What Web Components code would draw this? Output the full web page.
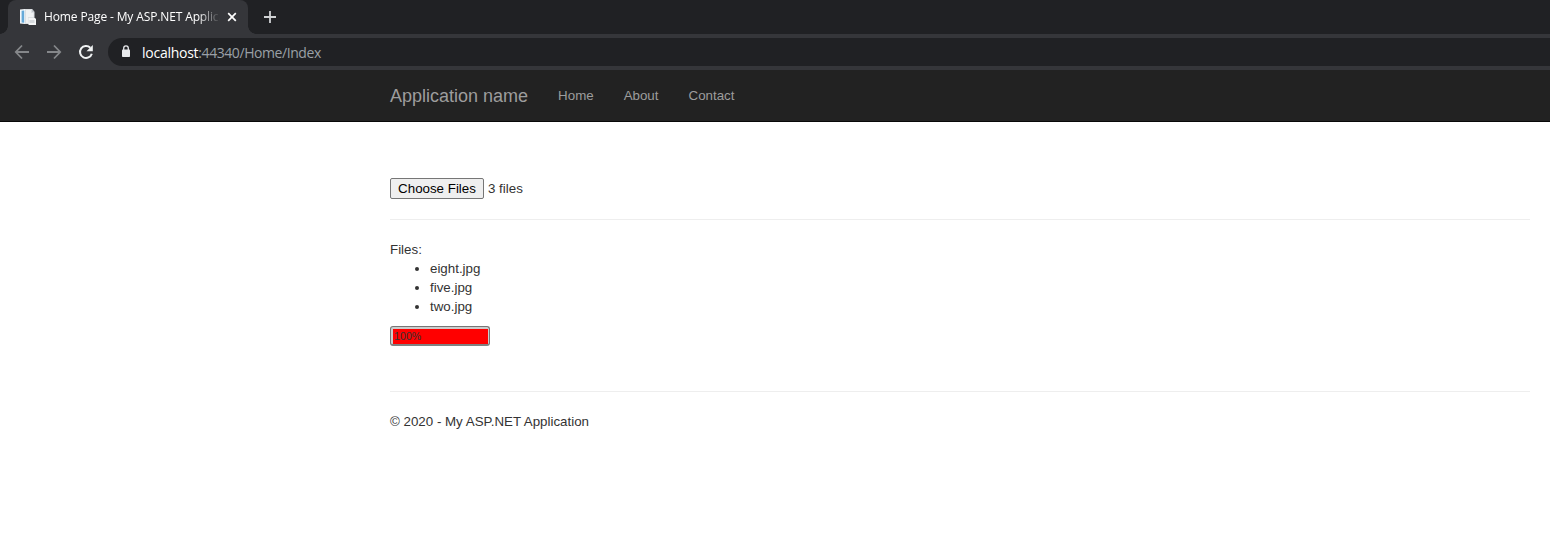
<!DOCTYPE html>
<html lang="en"><head><meta charset="utf-8"><title>Home Page - My ASP.NET Application</title>
<style>html,body{margin:0;background:#fff}body{height:550px;overflow:hidden;font-family:"Liberation Sans",Arial,sans-serif;font-size:13.333px;line-height:19px;color:#333}</style></head>
<body>
<browser-tabs><browser-tab>Home Page - My ASP.NET Application</browser-tab></browser-tabs>
<browser-toolbar><span slot="host">localhost</span><span slot="path">:44340/Home/Index</span></browser-toolbar>
<site-nav><span slot="brand">Application name</span><nav-link>Home</nav-link><nav-link>About</nav-link><nav-link>Contact</nav-link></site-nav>
<page-body>
<file-picker>3 files</file-picker>
<rule-line></rule-line>
<file-list><file-item>eight.jpg</file-item><file-item>five.jpg</file-item><file-item>two.jpg</file-item></file-list>
<upload-progress>100%</upload-progress>
<rule-line></rule-line>
<page-footer>© 2020 - My ASP.NET Application</page-footer>
</page-body>
<script>
const define=(name,html)=>customElements.define(name,class extends HTMLElement{
  constructor(){super();this.attachShadow({mode:'open'}).innerHTML=html;}
});
define('browser-tabs',`<style>:host{display:flex;height:34px;background:#202124;padding-left:8px;box-sizing:border-box}
.add{width:14px;height:14px;margin:10px 0 0 15px}</style><slot></slot>
<svg class="add" viewBox="0 0 14 14"><path d="M7 1v12M1 7h12" stroke="#d0d2d4" stroke-width="1.8"/></svg>`);
define('browser-tab',`<style>:host{display:flex;position:relative;width:240px;height:34px;box-sizing:border-box;padding-left:12px;background:#35363a;border-radius:8px 8px 0 0;color:#fff;font:12px/34px "Open Sans","Noto Sans",sans-serif}
:host::before,:host::after{content:"";position:absolute;bottom:0;width:8px;height:8px}
:host::before{left:-8px;background:radial-gradient(circle at 0 0,#202124 7.5px,#35363a 8px)}
:host::after{right:-8px;background:radial-gradient(circle at 100% 0,#202124 7.5px,#35363a 8px)}
.icon{width:16px;height:16px;margin:9px 8px 0 0;flex:none}.title{width:176px;overflow:hidden;white-space:nowrap;letter-spacing:-.13px;-webkit-mask-image:linear-gradient(90deg,#000 154px,transparent 176px)}
.close{width:10px;height:10px;margin:12px 0 0 7px;flex:none}</style>
<svg class="icon" viewBox="0 0 16 16"><path d="M0 .5l5-.5v15l-5-.6z" fill="#f3f7fa"/><path d="M1.6 1.8l2.6-.4v12.3l-2.6-.3z" fill="#65a9d8"/><path d="M5 0h7l2.5 3v12H5z" fill="#dcdfe2"/><path d="M6 1h5v3h2.5v4H8v6H6z" fill="#f0f2f3"/><path d="M8.5 9H15l1 1v6H8.5z" fill="#f4f5f5"/><path d="M9.5 11h5v3h-5z" fill="#d5d9dc"/><path d="M12 0v3h2.5" fill="#bfc4c9"/></svg>
<span class="title"><slot></slot></span><svg class="close" viewBox="0 0 10 10"><path d="M1.2 1.2l7.6 7.6m0-7.6L1.2 8.8" stroke="#fff" stroke-width="1.7"/></svg>`);
define('browser-toolbar',`<style>:host{display:flex;height:36px;background:#35363a;box-sizing:border-box;align-items:center}
svg{flex:none}.nav{width:16px;height:16px}.back{margin-left:14px}.fwd{margin-left:16px}.reload{margin-left:16px}
.address{display:flex;align-items:center;flex:1;height:28px;margin-left:14px;border-radius:14px 0 0 14px;background:#202124;color:#fff;font:14px/28px "Open Sans","Noto Sans",sans-serif;letter-spacing:-.26px}
.host,.path{padding-top:1px}.lock{width:10px;height:13px;margin:-2px 11px 0 13px}.path{color:#9aa0a6;letter-spacing:-.43px}</style>
<svg class="nav back" viewBox="0 0 16 16" fill="none" stroke="#85878a" stroke-width="1.8"><path d="M15 8H2M8 1.5L1.8 8 8 14.5"/></svg>
<svg class="nav fwd" viewBox="0 0 16 16" fill="none" stroke="#85878a" stroke-width="1.8"><path d="M1 8h13M8 1.5L14.2 8 8 14.5"/></svg>
<svg class="nav reload" viewBox="0 0 16 16"><path d="M13.8 9.7A6 6 0 1 1 12.3 3.7" fill="none" stroke="#f1f3f4" stroke-width="2"/><path d="M14.8 1v6.3H8.5z" fill="#f1f3f4"/></svg>
<div class="address"><svg class="lock" viewBox="0 0 10 13"><path d="M2.7 5V3.2a2.3 2.3 0 0 1 4.6 0V5" fill="none" stroke="#e8eaed" stroke-width="1.3"/><rect x="1" y="4.5" width="8" height="7.5" rx=".8" fill="#e8eaed"/></svg><span class="host"><slot name="host"></slot></span><span class="path"><slot name="path"></slot></span></div>`);
define('site-nav',`<style>:host{display:flex;height:52px;box-sizing:border-box;padding-left:390px;background:#222;border-bottom:1px solid #080808;color:#9d9d9d;line-height:51px}
.brand{font-size:18px;line-height:53px;height:51px;margin-right:15px;white-space:nowrap}</style><span class="brand"><slot name="brand"></slot></span><slot></slot>`);
define('nav-link',`<style>:host{display:block;padding:0 15px}</style><slot></slot>`);
define('page-body',`<style>:host{display:flow-root;margin:56px 20px 0 390px}</style><slot></slot>`);
define('file-picker',`<style>:host{display:flex;height:21px;gap:4px;line-height:21px}button{width:94px;height:21px;box-sizing:border-box;border:1px solid #767676;border-radius:2px;background:#efefef;color:#000;padding:0;font:inherit;line-height:19px;white-space:nowrap}</style><button>Choose Files</button><span><slot></slot></span>`);
define('rule-line',`<style>:host{display:block;height:1px;background:#eee;margin:20px 0}</style>`);
define('file-list',`<style>:host{display:block}ul{margin:0;padding:0 0 0 40px}</style><div>Files:</div><ul><slot></slot></ul>`);
define('file-item',`<style>:host{display:list-item;list-style:disc}</style><slot></slot>`);
define('upload-progress',`<style>:host{display:block;width:99.5px;height:20px;box-sizing:border-box;margin:10px 0 45px;padding:2px 1px 0 2px;border:1px solid #767676;border-bottom:2px solid #808080;border-radius:3px;background:#ccc}.fill{height:15px;background:red;padding-left:1px;font-size:10.5px;line-height:15px;letter-spacing:.1px}</style><div class="fill"><slot></slot></div>`);
define('page-footer',`<style>:host{display:block}</style><slot></slot>`);
</script></body></html>
